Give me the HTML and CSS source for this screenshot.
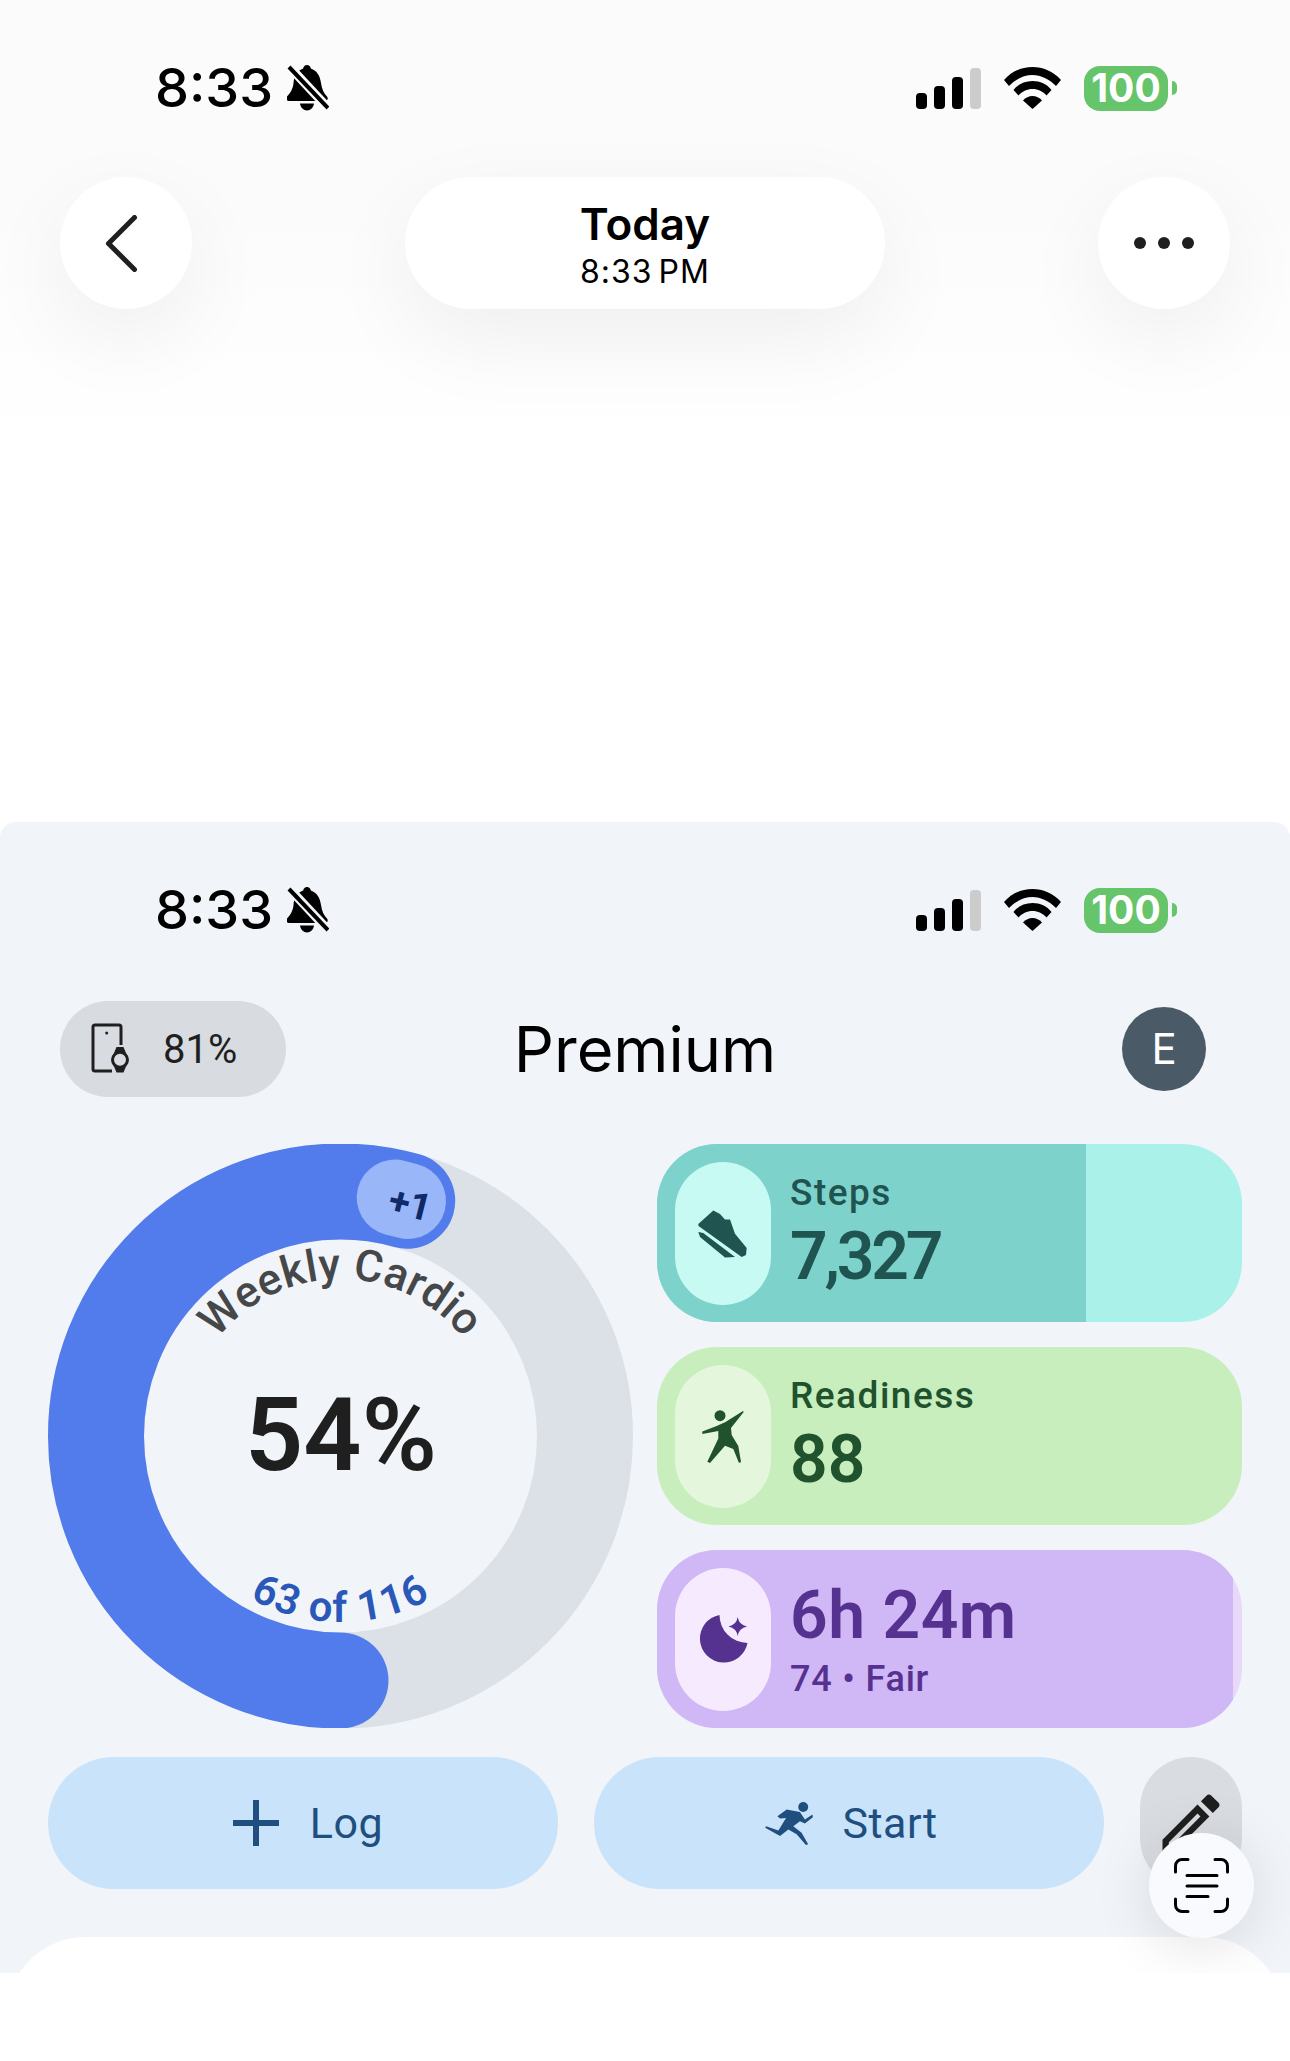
FILE: index.html
```html
<!DOCTYPE html>
<html lang="en">

<head>
    <meta charset="UTF-8">
    <meta name="viewport" content="width=device-width, initial-scale=1.0">
    <title>Premium</title>
    <link rel="stylesheet" href="styles.css">
</head>

<body>
    <svg class="sprites" aria-hidden="true">
        <symbol id="bell" viewBox="0 0 42 46">
            <path d="M20 0c2 0 3.500 1.500 3.800 3.500C30 5.500 33 11 34 18c.8 6 3 10.500 6 13.500 1.500 2 .5 4.500-2 4.500H2c-2.500 0-3.500-2.500-2-4.500C3 28.500 6 24 6.500 18 7 11 10 5.500 16.200 3.500 16.500 1.500 18 0 20 0z" />
            <path d="M13 38.500h14c-.5 4-3.500 7-7 7s-6.500-3-7-7z" />
            <path class="bell-gap" d="M-1 -2 42 44" />
            <path class="bell-slash" d="M2 2 41 43" />
        </symbol>
        <symbol id="wifi" viewBox="0 0 57 42">
            <path d="M0 13C8 4 18 0 28.500 0S49 4 57 13l-5 6C45 12 37 8 28.500 8S12 12 5 19z" />
            <path d="M9.500 23C14 17 21 14 28.500 14S43 17 47.500 23l-5 5.500C39 24.500 34 22 28.500 22S18 24.500 14.500 28.500z" />
            <path d="M19 33.500C21.500 30.500 25 29 28.500 29S35.500 30.500 38 33.500L28.500 42z" />
        </symbol>
    </svg>

    <header class="top">
        <div class="status-bar">
            <div class="status-left">
                <span class="clock">8:33</span>
                <svg class="bell-icon"><use href="#bell" /></svg>
            </div>
            <div class="status-right">
                <div class="signal">
                    <span class="bar bar-1"></span>
                    <span class="bar bar-2"></span>
                    <span class="bar bar-3"></span>
                    <span class="bar bar-4"></span>
                </div>
                <svg class="wifi-icon"><use href="#wifi" /></svg>
                <div class="battery">
                    <span class="battery-body">100</span>
                    <span class="battery-nub"></span>
                </div>
            </div>
        </div>

        <nav class="nav">
            <button class="round-btn">
                <svg class="back-icon" viewBox="0 0 33 57"><path d="M29.500 2.500 3.500 28.500l26 26" /></svg>
            </button>
            <div class="title-pill">
                <div class="title-main">Today</div>
                <div class="title-sub">8:33 PM</div>
            </div>
            <button class="round-btn">
                <span class="dots"><i></i><i></i><i></i></span>
            </button>
        </nav>
    </header>

    <main class="app">
        <div class="status-bar">
            <div class="status-left">
                <span class="clock">8:33</span>
                <svg class="bell-icon"><use href="#bell" /></svg>
            </div>
            <div class="status-right">
                <div class="signal">
                    <span class="bar bar-1"></span>
                    <span class="bar bar-2"></span>
                    <span class="bar bar-3"></span>
                    <span class="bar bar-4"></span>
                </div>
                <svg class="wifi-icon"><use href="#wifi" /></svg>
                <div class="battery">
                    <span class="battery-body">100</span>
                    <span class="battery-nub"></span>
                </div>
            </div>
        </div>

        <div class="app-head">
            <div class="watch-pill">
                <svg class="watch-icon" viewBox="0 0 44 60">
                    <path class="watch-phone" d="M33 26V8a2 2 0 0 0-2-2H7a2 2 0 0 0-2 2v42a2 2 0 0 0 2 2h17" />
                    <circle class="watch-dot" cx="18.700" cy="14" r="1.500" />
                    <path class="watch-strap" d="M28.500 28h7l2.500 6H26zM26 47.500h12l-2.500 6h-7z" />
                    <circle class="watch-face" cx="32" cy="40.800" r="7.500" />
                </svg>
                <span>81%</span>
            </div>
            <h1 class="app-title">Premium</h1>
            <div class="avatar">E</div>
        </div>

        <section class="summary">
            <svg class="ring" viewBox="0 0 585 584">
                <defs>
                    <path id="arc-top" d="M145 238.300A157 157 0 0 1 440 238.300" />
                    <path id="arc-bottom" d="M131.400 385A186 186 0 0 0 453.600 385" />
                </defs>
                <circle class="ring-track" cx="292.500" cy="292" r="244.500" />
                <circle class="ring-value" cx="292.500" cy="292" r="244.500" pathLength="100" stroke-dasharray="54.400 100" transform="rotate(90 292.500 292)" />
                <line class="ring-bubble" x1="346.700" y1="53.600" x2="360" y2="57" />
                <text class="ring-plus" x="362" y="73" text-anchor="middle" transform="rotate(14 362 61)">+1</text>
                <text class="ring-label"><textPath href="#arc-top" startOffset="50%" text-anchor="middle">Weekly Cardio</textPath></text>
                <text class="ring-percent" x="293" y="326" text-anchor="middle">54%</text>
                <text class="ring-count"><textPath href="#arc-bottom" startOffset="50%" text-anchor="middle">63 of 116</textPath></text>
            </svg>

            <div class="cards">
                <div class="card card-steps">
                    <div class="card-fill" style="width: 73.3%"></div>
                    <div class="card-icon">
                        <svg viewBox="0 0 96 96">
                            <path d="M23.300 39 38.300 25.500 45 29 50 34.400 55 34.400 60 48.700 71.700 63 71 70 66.700 72 23.500 41z" />
                            <path d="M23.300 47 28.300 48 60 72 50 72.600 25 52z" />
                        </svg>
                    </div>
                    <div class="card-text">
                        <div class="card-small">Steps</div>
                        <div class="card-big">7,327</div>
                    </div>
                </div>
                <div class="card card-ready">
                    <div class="card-icon">
                        <svg viewBox="0 0 96 96">
                            <circle cx="45" cy="27.700" r="5.500" />
                            <path d="M68.700 24 56 40 56.700 47 63.300 58 66 74 64 75 58.300 61 50 57.700 35 75 32.300 73.800 43.300 50.600 43.300 43 27.300 46 27.300 43.400 41.700 38 50.500 34 68 23z" />
                        </svg>
                    </div>
                    <div class="card-text">
                        <div class="card-small">Readiness</div>
                        <div class="card-big">88</div>
                    </div>
                </div>
                <div class="card card-sleep">
                    <div class="card-fill" style="width: 98.5%"></div>
                    <div class="card-icon">
                        <svg viewBox="0 0 96 96">
                            <path d="M44.500 24A24 24 0 1 0 72.500 52 28 28 0 0 1 44.500 24z" />
                            <path d="M62.700 26Q64 34 72 35.400 64 37 62.700 45 61.400 37 53.500 35.400 61.400 34 62.700 26z" />
                        </svg>
                    </div>
                    <div class="card-text">
                        <div class="card-big">6h 24m</div>
                        <div class="card-small card-small-sleep">74 • Fair</div>
                    </div>
                </div>
            </div>
        </section>

        <div class="actions">
            <button class="action">
                <svg class="plus-icon" viewBox="0 0 46 46"><path d="M23 0v46M0 23h46" /></svg>
                <span>Log</span>
            </button>
            <button class="action">
                <svg class="run-icon" viewBox="15 10.700 49 43.300">
                    <circle cx="53.300" cy="15.700" r="5" />
                    <path d="M27.300 25 36.700 18.300 50 20.700 55 28.300 62.700 23.300 63 26 55 32.300 50 30 43.300 35 51.700 41.700 58.300 53.300 56 54 46.700 43.300 38.300 38.300 30 45 15 36.700 16 35 28.300 39.300 36 26.700 30 27.300z" />
                </svg>
                <span>Start</span>
            </button>
            <button class="edit-btn">
                <svg class="edit-icon" viewBox="0 0 24 24">
                    <path d="M3 17.250V21h3.750L17.810 9.940l-3.750-3.750L3 17.250zM5.920 19H5v-.92l9.060-9.060.92.92L5.920 19zM20.710 5.630l-2.340-2.340c-.2-.2-.45-.29-.71-.29s-.51.1-.7.29l-1.830 1.830 3.750 3.750 1.830-1.830c.39-.39.39-1.020 0-1.410z" />
                </svg>
            </button>
        </div>

        <div class="sheet"></div>

        <button class="fab">
            <svg class="scan-icon" viewBox="0 0 55 55">
                <path d="M1.500 14V8a6.500 6.500 0 0 1 6.500-6.500h6M41 1.500h6A6.500 6.500 0 0 1 53.500 8v6M1.500 41v6A6.500 6.500 0 0 0 8 53.500h6M53.500 41v6a6.500 6.500 0 0 1-6.500 6.500h-6" />
                <path d="M13 17.500h30M13 28h30M13 38.500h21" />
            </svg>
        </button>
    </main>
</body>

</html>
```

FILE: styles.css
```css
:root {
    --ink: #1f1f1f;
    --app-bg: #f1f4f9;
    --blue: #527bec;
    --sans: Inter, "Liberation Sans", sans-serif;
    --app-font: Roboto, "Liberation Sans", sans-serif;
}

* {
    box-sizing: border-box;
}

body {
    margin: 0;
    background: #ffffff;
    color: var(--ink);
    font-family: var(--sans);
}

button {
    border: 0;
    padding: 0;
    font: inherit;
    color: inherit;
}

.sprites {
    display: none;
}

/* top screen */
.top {
    --status-bg: #fbfbfb;
    height: 822px;
    padding-top: 60px;
    background: linear-gradient(#fbfbfb 0, #fbfbfb 200px, #ffffff 450px);
}

.status-bar {
    display: flex;
    align-items: center;
    justify-content: space-between;
    height: 56px;
    padding: 0 113px 0 155px;
    color: #000000;
}

.status-left {
    display: flex;
    align-items: center;
    gap: 14px;
}

.clock {
    font-size: 54px;
    font-weight: 500;
    line-height: 56px;
}

.bell-icon {
    width: 42px;
    height: 46px;
    fill: currentColor;
}

.bell-gap {
    fill: none;
    stroke: var(--status-bg);
    stroke-width: 9px;
}

.bell-slash {
    fill: none;
    stroke: currentColor;
    stroke-width: 4px;
}

.status-right {
    display: flex;
    align-items: center;
    gap: 23px;
}

.signal {
    display: flex;
    align-items: flex-end;
    gap: 7px;
    height: 41px;
}

.bar {
    width: 11px;
    border-radius: 4px;
    background: #000000;
}

.bar-1 {
    height: 16px;
}

.bar-2 {
    height: 23px;
}

.bar-3 {
    height: 32px;
}

.bar-4 {
    height: 41px;
    background: #cccccc;
}

.wifi-icon {
    width: 57px;
    height: 42px;
    fill: currentColor;
}

.battery {
    display: flex;
    align-items: center;
    gap: 4px;
}

.battery-body {
    width: 84px;
    height: 45px;
    border-radius: 16px;
    background: #66c46a;
    color: #ffffff;
    font-size: 39px;
    font-weight: 700;
    line-height: 44px;
    text-align: center;
}

.battery-nub {
    width: 5px;
    height: 14px;
    border-radius: 0 7px 7px 0;
    background: #66c46a;
}

.nav {
    display: flex;
    justify-content: space-between;
    margin-top: 61px;
    padding: 0 60px;
}

.round-btn {
    display: flex;
    align-items: center;
    justify-content: center;
    width: 132px;
    height: 132px;
    border-radius: 50%;
    background: #ffffff;
    box-shadow: 0 30px 90px rgba(0, 0, 0, 0.06);
}

.back-icon {
    width: 33px;
    height: 57px;
    margin-right: 10px;
    fill: none;
    stroke: var(--ink);
    stroke-width: 5px;
    stroke-linecap: round;
    stroke-linejoin: round;
}

.dots {
    display: flex;
    gap: 12px;
}

.dots i {
    width: 12px;
    height: 12px;
    border-radius: 50%;
    background: var(--ink);
}

.title-pill {
    display: flex;
    flex-direction: column;
    align-items: center;
    justify-content: center;
    width: 480px;
    height: 132px;
    padding-top: 4px;
    border-radius: 66px;
    background: #ffffff;
    box-shadow: 0 30px 90px rgba(0, 0, 0, 0.06);
    color: #000000;
}

.title-main {
    font-size: 44px;
    font-weight: 600;
    line-height: 50px;
}

.title-sub {
    margin-top: 4px;
    font-size: 32px;
    line-height: 38px;
    letter-spacing: 1px;
    word-spacing: -4px;
}

/* app screen */
.app {
    --status-bg: var(--app-bg);
    position: relative;
    height: 1151px;
    padding-top: 60px;
    overflow: hidden;
    border-radius: 16px 16px 0 0;
    background: var(--app-bg);
}

.app-head {
    display: grid;
    grid-template-columns: 1fr auto 1fr;
    align-items: center;
    height: 96px;
    margin-top: 63px;
    padding: 0 60px;
}

.watch-pill {
    display: flex;
    align-items: center;
    gap: 31px;
    justify-self: start;
    width: 226px;
    height: 96px;
    padding-left: 28px;
    border-radius: 48px;
    background: #d8dbe0;
    font-family: var(--app-font);
    font-size: 40px;
}

.watch-icon {
    width: 44px;
    height: 60px;
}

.watch-phone {
    fill: none;
    stroke: var(--ink);
    stroke-width: 3px;
}

.watch-dot,
.watch-strap {
    fill: var(--ink);
}

.watch-face {
    fill: #d8dbe0;
    stroke: var(--ink);
    stroke-width: 3px;
}

.app-title {
    margin: 0;
    color: #000000;
    font-size: 63px;
    font-weight: 400;
    line-height: 76px;
}

.avatar {
    justify-self: end;
    width: 84px;
    height: 84px;
    margin-right: 24px;
    border-radius: 50%;
    background: #4a5a66;
    color: #ffffff;
    font-size: 42px;
    line-height: 84px;
    text-align: center;
}

.summary {
    display: flex;
    gap: 24px;
    margin-top: 47px;
    padding: 0 48px;
    font-family: var(--app-font);
}

.ring {
    flex: none;
    width: 585px;
    height: 584px;
}

.ring-track,
.ring-value {
    fill: none;
    stroke-width: 96px;
}

.ring-track {
    stroke: #dce1e8;
}

.ring-value {
    stroke: var(--blue);
    stroke-linecap: round;
}

.ring-bubble {
    stroke: #98b6f8;
    stroke-width: 76px;
    stroke-linecap: round;
}

.ring-plus {
    fill: #0f2a66;
    font-size: 38px;
    font-weight: 700;
}

.ring-label {
    fill: #454749;
    font-size: 44px;
    font-weight: 500;
    letter-spacing: 0.2px;
}

.ring-percent {
    fill: var(--ink);
    font-size: 102px;
    font-weight: 600;
}

.ring-count {
    fill: #2a58b8;
    font-size: 42px;
    font-weight: 600;
    letter-spacing: 1.200px;
}

.cards {
    display: flex;
    flex: 1;
    flex-direction: column;
    gap: 25px;
}

.card {
    position: relative;
    display: flex;
    align-items: center;
    gap: 19px;
    height: 178px;
    padding-left: 18px;
    overflow: hidden;
    border-radius: 60px;
}

.card-fill {
    position: absolute;
    top: 0;
    bottom: 0;
    left: 0;
}

.card-icon,
.card-text {
    position: relative;
}

.card-icon {
    display: flex;
    align-items: center;
    justify-content: center;
    width: 96px;
    height: 143px;
    border-radius: 48px;
}

.card-icon svg {
    width: 96px;
    height: 96px;
    fill: currentColor;
}

.card-text {
    padding-bottom: 10px;
}

.card-small {
    font-size: 37px;
    font-weight: 500;
    letter-spacing: 1.500px;
    line-height: 57px;
}

.card-big {
    font-size: 66px;
    font-weight: 600;
    line-height: 72px;
}

.card-steps .card-big {
    letter-spacing: -3.200px;
}

.card-sleep .card-text {
    padding: 8px 0 0;
}

.card-sleep .card-big {
    letter-spacing: 0.5px;
}

.card-small-sleep {
    font-size: 36px;
    letter-spacing: 0.8px;
    line-height: 54px;
}

.card-steps {
    background: #aaf1ea;
    color: #1f5450;
}

.card-steps .card-fill {
    background: #7dd2cc;
}

.card-steps .card-icon {
    background: #c7faf3;
}

.card-ready {
    background: #c8eebd;
    color: #21522e;
}

.card-ready .card-icon {
    background: #e4f7dc;
}

.card-sleep {
    background: #e8d9fb;
    color: #553190;
}

.card-sleep .card-fill {
    background: #d0b7f5;
}

.card-sleep .card-icon {
    background: #f6ebfe;
}

.actions {
    display: flex;
    gap: 36px;
    margin-top: 29px;
    padding: 0 48px;
}

.action {
    display: flex;
    flex: 1;
    align-items: center;
    justify-content: center;
    height: 132px;
    padding-left: 5px;
    border-radius: 66px;
    background: #c9e3fb;
    color: #204f7f;
    font-family: var(--app-font);
    font-size: 43px;
    letter-spacing: 0.5px;
}

.plus-icon {
    width: 46px;
    height: 46px;
    margin: 0 31px 0 5px;
    fill: none;
    stroke: currentColor;
    stroke-width: 6px;
}

.run-icon {
    width: 49px;
    height: 43px;
    margin-right: 28px;
    fill: currentColor;
}

.edit-btn {
    display: flex;
    align-items: center;
    justify-content: center;
    width: 102px;
    height: 132px;
    border-radius: 51px;
    background: #d9dce1;
}

.edit-icon {
    width: 76px;
    height: 76px;
    fill: var(--ink);
}

.sheet {
    height: 120px;
    margin: 48px 6px 0;
    border-radius: 80px 80px 0 0;
    background: #ffffff;
}

.fab {
    position: absolute;
    right: 36px;
    bottom: 35px;
    display: flex;
    align-items: center;
    justify-content: center;
    width: 105px;
    height: 105px;
    border-radius: 50%;
    background: #f8fafe;
    box-shadow: 0 8px 60px rgba(0, 0, 0, 0.12);
}

.scan-icon {
    width: 55px;
    height: 55px;
    fill: none;
    stroke: #000000;
    stroke-width: 3px;
    stroke-linecap: round;
}
```
